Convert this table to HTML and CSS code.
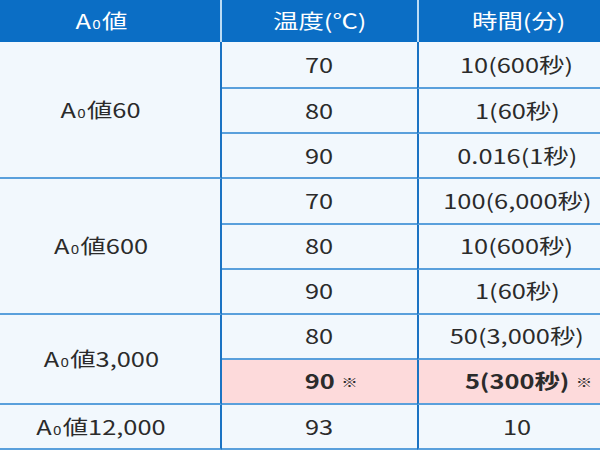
FILE: index.html
```html
<!DOCTYPE html>
<html lang="ja">
<head>
<meta charset="utf-8">
<link rel="stylesheet" href="styles.css">
</head>
<body>
<table class="a0-table">
  <colgroup>
    <col class="w1"><col class="w2"><col class="w3">
  </colgroup>
  <thead>
    <tr>
      <th class="c1"><span class="t">A<span class="sub">0</span>値</span></th>
      <th class="c2"><span class="t">温度(℃)</span></th>
      <th class="c3"><span class="t">時間(分)</span></th>
    </tr>
  </thead>
  <tbody>
    <tr class="first">
      <td class="c1" rowspan="3"><span class="t">A<span class="sub">0</span>値60</span></td>
      <td class="c2"><span class="t">70</span></td>
      <td class="c3"><span class="t">10(600秒)</span></td>
    </tr>
    <tr>
      <td class="c2"><span class="t">80</span></td>
      <td class="c3"><span class="t">1(60秒)</span></td>
    </tr>
    <tr>
      <td class="c2"><span class="t">90</span></td>
      <td class="c3"><span class="t">0.016(1秒)</span></td>
    </tr>
    <tr>
      <td class="c1" rowspan="3"><span class="t">A<span class="sub">0</span>値600</span></td>
      <td class="c2"><span class="t">70</span></td>
      <td class="c3"><span class="t">100(6,000秒)</span></td>
    </tr>
    <tr>
      <td class="c2"><span class="t">80</span></td>
      <td class="c3"><span class="t">10(600秒)</span></td>
    </tr>
    <tr>
      <td class="c2"><span class="t">90</span></td>
      <td class="c3"><span class="t">1(60秒)</span></td>
    </tr>
    <tr>
      <td class="c1" rowspan="2"><span class="t">A<span class="sub">0</span>値3,000</span></td>
      <td class="c2"><span class="t">80</span></td>
      <td class="c3"><span class="t">50(3,000秒)</span></td>
    </tr>
    <tr class="hl">
      <td class="c2"><span class="t bold">90<span class="note">※</span></span></td>
      <td class="c3"><span class="t bold">5(300秒)<span class="note">※</span></span></td>
    </tr>
    <tr>
      <td class="c1"><span class="t">A<span class="sub">0</span>値12,000</span></td>
      <td class="c2"><span class="t">93</span></td>
      <td class="c3"><span class="t">10</span></td>
    </tr>
  </tbody>
</table>
</body>
</html>
```

FILE: styles.css
```css
html, body {
  margin: 0;
  padding: 0;
  background: #f2f8fd;
}
body {
  width: 600px;
  height: 450px;
  overflow: hidden;
  font-family: "Noto Sans CJK JP", "Noto Sans", sans-serif;
  color: #2b2b2b;
}
.a0-table {
  width: 600px;
  table-layout: fixed;
  border-collapse: separate;
  border-spacing: 0;
}
.w1 { width: 222px; }
.w2 { width: 195px; }
.w3 { width: 183px; }

.a0-table th,
.a0-table td {
  padding: 0;
  text-align: center;
  vertical-align: middle;
  font-weight: normal;
  font-size: 20px;
  line-height: 1;
}
.a0-table th {
  background: #0b6ec5;
  color: #ffffff;
  height: 42px;
}
.a0-table th.c1 { border-right: 2px solid #bcdcf5; padding-right: 18px; }
.a0-table th.c3 { border-left: 2px solid #bcdcf5; padding-left: 18px; }

.a0-table td {
  background: #f2f8fd;
  border-bottom: 2px solid #5aa0dc;
}
.a0-table td.c1 { border-right: 2px solid #1b73c3; padding-right: 18px; }
.a0-table td.c3 { border-left: 2px solid #1b73c3; padding-left: 15px; }

.a0-table tbody tr { height: 45.1px; }
.a0-table tbody tr.first { height: 47.3px; }

.a0-table tr.hl td.c2,
.a0-table tr.hl td.c3 { background: #fddadb; }

.t {
  display: inline-block;
  position: relative;
  transform: scaleX(1.27);
  transform-origin: center;
  white-space: nowrap;
}
.bold { font-weight: bold; }
.sub {
  font-size: 0.6em;
  vertical-align: baseline;
  margin: 0 1px 0 1px;
}
.note {
  position: absolute;
  left: 100%;
  top: 4px;
  margin-left: 5px;
  font-size: 13px;
  font-weight: normal;
}
```
